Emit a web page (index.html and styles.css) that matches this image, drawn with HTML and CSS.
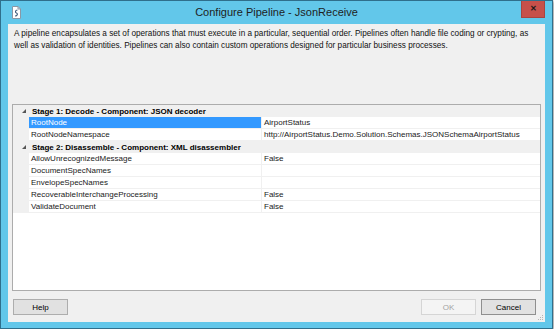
FILE: index.html
```html
<!DOCTYPE html>
<html>
<head>
    <title>Configure Pipeline - JsonReceive</title>
    <link rel="stylesheet" href="styles.css">
</head>
<body>
    <div class="window">
        <div class="titlebar">
            <svg class="app-icon" width="9" height="13" viewBox="0 0 9 13">
                <path d="M0.5 0.5 H6 L8.5 3 V12.5 H0.5 Z" fill="#fff" stroke="#8a98a6"/>
                <path d="M6 0.5 V3 H8.5" fill="none" stroke="#8a98a6"/>
                <path d="M5.5 4 C3 4 3 6.5 4.5 7 C6 7.5 5.5 10 3 10" fill="none" stroke="#3b5b7a" stroke-width="1.1"/>
            </svg>
            <span class="title">Configure Pipeline - JsonReceive</span>
            <div class="close">&#x2715;</div>
        </div>
        <div class="client">
            <p class="desc">A pipeline encapsulates a set of operations that must execute in a particular, sequential order. Pipelines often handle file coding or crypting, as well as validation of identities. Pipelines can also contain custom operations designed for particular business processes.</p>

            <div class="grid">
                <div class="cat">
                    <span class="toggle"><svg width="4" height="4" viewBox="0 0 4 4"><path d="M4 0 V4 H0 Z" fill="#555"/></svg></span>
                    Stage 1: Decode - Component: JSON decoder
                </div>
                <div class="row">
                    <div class="gutter"></div>
                    <div class="name selected">RootNode</div>
                    <div class="val">AirportStatus</div>
                </div>
                <div class="row">
                    <div class="gutter"></div>
                    <div class="name">RootNodeNamespace</div>
                    <div class="val">http://AirportStatus.Demo.Solution.Schemas.JSONSchemaAirportStatus</div>
                </div>
                <div class="cat">
                    <span class="toggle"><svg width="4" height="4" viewBox="0 0 4 4"><path d="M4 0 V4 H0 Z" fill="#555"/></svg></span>
                    Stage 2: Disassemble - Component: XML disassembler
                </div>
                <div class="row">
                    <div class="gutter"></div>
                    <div class="name">AllowUnrecognizedMessage</div>
                    <div class="val">False</div>
                </div>
                <div class="row">
                    <div class="gutter"></div>
                    <div class="name">DocumentSpecNames</div>
                    <div class="val"></div>
                </div>
                <div class="row">
                    <div class="gutter"></div>
                    <div class="name">EnvelopeSpecNames</div>
                    <div class="val"></div>
                </div>
                <div class="row">
                    <div class="gutter"></div>
                    <div class="name">RecoverableInterchangeProcessing</div>
                    <div class="val">False</div>
                </div>
                <div class="row">
                    <div class="gutter"></div>
                    <div class="name">ValidateDocument</div>
                    <div class="val">False</div>
                </div>
            </div>

            <div class="buttons">
                <button>Help</button>
                <span class="spacer"></span>
                <button disabled>OK</button>
                <button class="cancel">Cancel</button>
            </div>

            <svg class="grip" width="6" height="6" viewBox="0 0 6 6">
                <rect x="4" y="0" width="1" height="1" fill="#b5b5b5"/>
                <rect x="2" y="2" width="1" height="1" fill="#b5b5b5"/>
                <rect x="4" y="2" width="1" height="1" fill="#b5b5b5"/>
                <rect x="0" y="4" width="1" height="1" fill="#b5b5b5"/>
                <rect x="2" y="4" width="1" height="1" fill="#b5b5b5"/>
                <rect x="4" y="4" width="1" height="1" fill="#b5b5b5"/>
            </svg>
        </div>
    </div>
</body>
</html>
```

FILE: styles.css
```css
body {
    margin: 0;
    background: #fff;
    font-family: 'Liberation Sans', Arial, sans-serif;
}

.window {
    width: 553px;
    height: 329px;
    box-sizing: border-box;
    background: #62c7ea;
    border: 1px solid #2f6f8c;
    padding: 0 7px 6px 7px;
    display: flex;
    flex-direction: column;
    box-shadow: 1px 1px 3px rgba(0,0,0,0.45);
}

.titlebar {
    height: 23px;
    display: grid;
    grid-template-columns: 1fr auto 1fr;
    align-items: start;
}

.app-icon {
    margin: 5px 0 0 4px;
}

.title {
    font-size: 11px;
    line-height: 23px;
    color: #1e1e1e;
}

.close {
    justify-self: end;
    width: 24px;
    height: 17px;
    box-sizing: border-box;
    background: #c7504a;
    border: 1px solid #a94440;
    border-top: none;
    color: #1a1a1a;
    font-size: 8px;
    font-weight: bold;
    line-height: 16px;
    text-align: center;
}

.client {
    flex: 1;
    background: #f0f0f0;
    padding: 4px 4px 7px 4px;
    display: flex;
    flex-direction: column;
    position: relative;
}

.desc {
    margin: 0;
    padding: 0 5px 0 2px;
    font-size: 8.2px;
    line-height: 12px;
    height: 24px;
    color: #111;
}

.grid {
    flex: 1;
    margin-top: 52px;
    background: #fff;
    border: 1px solid #acacac;
}

.cat {
    display: flex;
    align-items: center;
    height: 12px;
    background: #f0f0f0;
    font-size: 8px;
    font-weight: bold;
    color: #000;
}

.toggle {
    width: 19px;
    display: flex;
    justify-content: center;
    padding-left: 2px;
    box-sizing: border-box;
}

.row {
    display: grid;
    grid-template-columns: 16px 233px 1fr;
    height: 12px;
    font-size: 8px;
    line-height: 11px;
    color: #1a1a1a;
}

.gutter {
    background: #f0f0f0;
}

.name {
    padding-left: 2px;
    border-right: 1px solid #f0f0f0;
    border-bottom: 1px solid #f0f0f0;
    white-space: nowrap;
}

.name.selected {
    background: #3399ff;
    color: #fff;
}

.val {
    padding-left: 2px;
    border-bottom: 1px solid #f0f0f0;
    white-space: nowrap;
    overflow: hidden;
}

.buttons {
    display: flex;
    gap: 5px;
    margin-top: 8px;
    padding: 0 5px 0 1px;
}

.spacer {
    flex: 1;
}

button {
    width: 55px;
    height: 16px;
    padding: 0;
    font-family: 'Liberation Sans', Arial, sans-serif;
    font-size: 8px;
    color: #000;
    background: #e1e1e1;
    border: 1px solid #adadad;
}

button:disabled {
    background: #f4f4f4;
    border-color: #d5d5d5;
    color: #a3a3a3;
}

.cancel {
    border-color: #8f8f8f;
}

.grip {
    position: absolute;
    right: 1px;
    bottom: 1px;
}
```
